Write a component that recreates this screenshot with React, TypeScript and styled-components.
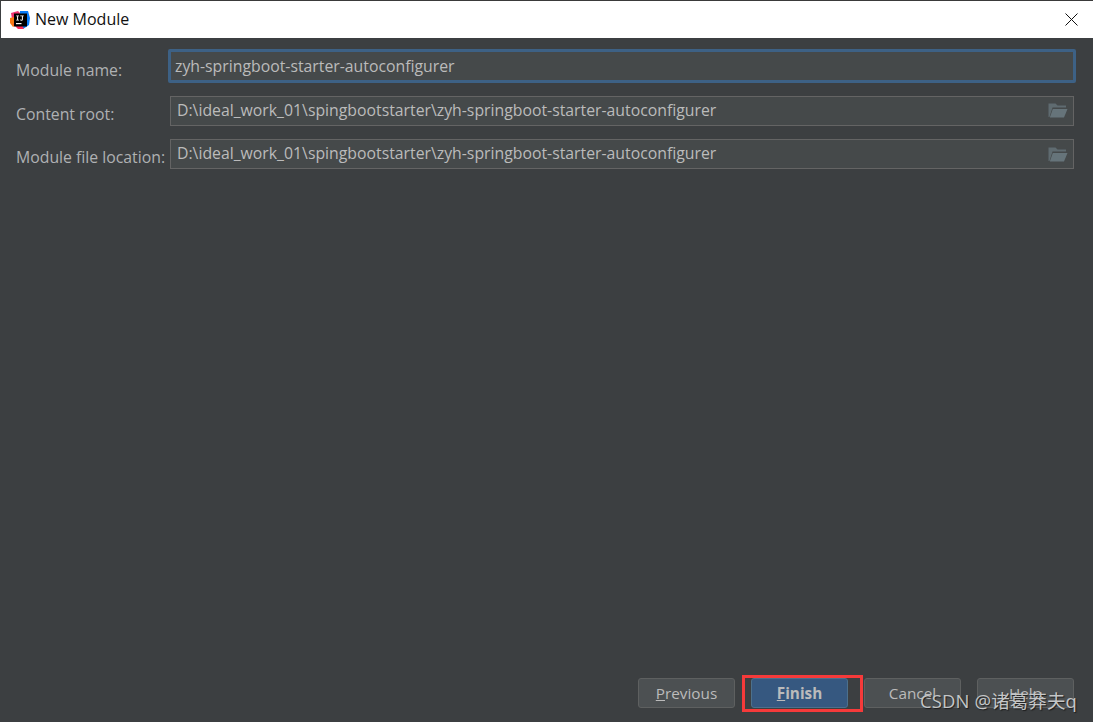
import React from "react";
import styled, { createGlobalStyle } from "styled-components";

const GlobalStyle = createGlobalStyle`
  html, body {
    margin: 0;
    padding: 0;
    background: #3c3f41;
  }
`;

const LogoIcon = () => (
  <svg width="20" height="20" viewBox="0 0 20 20">
    <path d="M1 3 L8 1 L11 4 L4 12 L2 9 Z" fill="#f2336f" />
    <path d="M0 8 L4 7 L6 15 L3 17 L0 13 Z" fill="#f97a12" />
    <path d="M10 1 L18 1 L20 8 L19 15 L13 19 L10 10 Z" fill="#087cfa" />
    <path d="M3 14 L8 19 L14 19 L10 12 Z" fill="#fe2857" />
    <rect x="4" y="3.5" width="13" height="13" fill="#000" />
    <rect x="6" y="13" width="5.5" height="1.2" fill="#fff" />
    <path d="M6.2 5.5 H9 V6.3 H8.1 V9.8 H9 V10.6 H6.2 V9.8 H7.1 V6.3 H6.2 Z" fill="#fff" />
    <path d="M10.2 5.5 H13.8 V6.3 H12.9 V9.4 Q12.9 10.7 11.5 10.7 Q10.5 10.7 10 10 L10.6 9.3 Q11 9.8 11.4 9.8 Q11.9 9.8 11.9 9.2 V6.3 H10.2 Z" fill="#fff" />
  </svg>
);

const CloseIcon = () => (
  <svg width="13" height="13" viewBox="0 0 13 13">
    <path d="M0.5 0.5 L12.5 12.5 M12.5 0.5 L0.5 12.5" stroke="#111" strokeWidth="1" fill="none" />
  </svg>
);

const FolderIcon = () => (
  <svg width="20" height="15" viewBox="0 0 20 15">
    <path d="M0.5 14 V0.5 H7.5 L9.5 2.5 H18 V4.5 H4.5 L1.5 14 Z" fill="#5f6b70" />
    <path d="M4.8 6 H19.5 L16 14.5 H1.8 Z" fill="#66747a" />
  </svg>
);

const fields = [
  {
    label: "Content root:",
    value: "D:\\ideal_work_01\\spingbootstarter\\zyh-springboot-starter-autoconfigurer",
    lift: 2,
  },
  {
    label: "Module file location:",
    value: "D:\\ideal_work_01\\spingbootstarter\\zyh-springboot-starter-autoconfigurer",
    lift: 3,
  },
];

const App = () => {
  return (
    <>
      <GlobalStyle />
      <SC.Window>
        <SC.TitleBar>
          <SC.TitleLeft>
            <LogoIcon />
            <SC.Title>New Module</SC.Title>
          </SC.TitleLeft>
          <CloseIcon />
        </SC.TitleBar>
        <SC.Body>
          <SC.Form>
            <SC.Row>
              <SC.Label $drop={8}>Module name:</SC.Label>
              <SC.FocusInput>zyh-springboot-starter-autoconfigurer</SC.FocusInput>
            </SC.Row>
            {fields.map((f) => (
              <SC.Row key={f.label}>
                <SC.Label $drop={6}>{f.label}</SC.Label>
                <SC.Input>
                  <SC.Value $lift={f.lift}>{f.value}</SC.Value>
                  <FolderIcon />
                </SC.Input>
              </SC.Row>
            ))}
          </SC.Form>
          <SC.Footer>
            <SC.Button>
              <u>P</u>revious
            </SC.Button>
            <SC.Button $primary>
              <u>F</u>inish
            </SC.Button>
            <SC.Button>Cancel</SC.Button>
            <SC.Button>
              <u>H</u>elp
            </SC.Button>
            <SC.Watermark>CSDN @诸葛莽夫q</SC.Watermark>
          </SC.Footer>
        </SC.Body>
      </SC.Window>
    </>
  );
};

const SC = {
  Window: styled.div`
    display: flex;
    flex-direction: column;
    width: 1093px;
    height: 722px;
    box-sizing: border-box;
    border-top: 1px solid #3a3a3a;
    border-left: 1px solid #3c3f41;
    overflow: hidden;
    background: #3c3f41;
    font-family: "Open Sans", "Noto Sans", sans-serif;
  `,
  TitleBar: styled.div`
    display: flex;
    align-items: center;
    justify-content: space-between;
    flex: none;
    height: 37px;
    padding: 0 15px 0 9px;
    background: #ffffff;
  `,
  TitleLeft: styled.div`
    display: flex;
    align-items: center;
    gap: 5px;
  `,
  Title: styled.span`
    margin-top: -2px;
    font-size: 16px;
    color: #111111;
  `,
  Body: styled.div`
    display: flex;
    flex-direction: column;
    justify-content: space-between;
    flex: 1;
    padding: 11px 19px 14px 15px;
  `,
  Form: styled.div`
    display: flex;
    flex-direction: column;
    gap: 13.5px;
  `,
  Row: styled.div`
    display: flex;
    align-items: center;
    gap: 3px;
    font-size: 15.8px;
    color: #bbbbbb;
  `,
  Label: styled.span<{ $drop: number }>`
    flex: none;
    width: 151px;
    padding-top: ${({ $drop }) => $drop}px;
    color: #afb1b3;
    white-space: nowrap;
  `,
  Input: styled.div`
    display: flex;
    align-items: center;
    justify-content: space-between;
    flex: 1;
    height: 30px;
    box-sizing: border-box;
    padding: 0 5px 0 6px;
    border: 1px solid #646464;
    background: #45494a;
  `,
  Value: styled.span<{ $lift: number }>`
    padding-bottom: ${({ $lift }) => $lift}px;
  `,
  FocusInput: styled.div`
    display: flex;
    align-items: center;
    flex: 1;
    height: 34px;
    margin: 0 -2px -1px;
    box-sizing: border-box;
    padding: 0 4px 1px;
    border: 3px solid #3d6185;
    border-radius: 2px;
    background: #45494a;
  `,
  Footer: styled.div`
    display: flex;
    justify-content: flex-end;
    gap: 16px;
    position: relative;
  `,
  Button: styled.div<{ $primary?: boolean }>`
    position: relative;
    display: flex;
    align-items: center;
    justify-content: center;
    width: 97px;
    height: 30px;
    box-sizing: border-box;
    border: 1px solid ${({ $primary }) => ($primary ? "#4c708c" : "#5e6060")};
    border-radius: 3px;
    background: ${({ $primary }) => ($primary ? "#365880" : "#4c5052")};
    font-size: 15.3px;
    font-weight: ${({ $primary }) => ($primary ? 700 : 400)};
    color: #bbbbbb;
    ${({ $primary }) =>
      $primary &&
      `
      &:after {
        content: "";
        position: absolute;
        inset: -4px -16px -5px -10px;
        border: 3px solid #f63a3a;
      }
    `}
  `,
  Watermark: styled.span`
    position: absolute;
    right: -3px;
    bottom: -5px;
    font-size: 18.5px;
    letter-spacing: 0.1px;
    color: #c4c6c7;
    font-family: "Open Sans", "Noto Sans CJK SC", sans-serif;
    white-space: nowrap;
    text-shadow: 1px 1px 1px #1c1c1c;
  `,
};

export default App;
